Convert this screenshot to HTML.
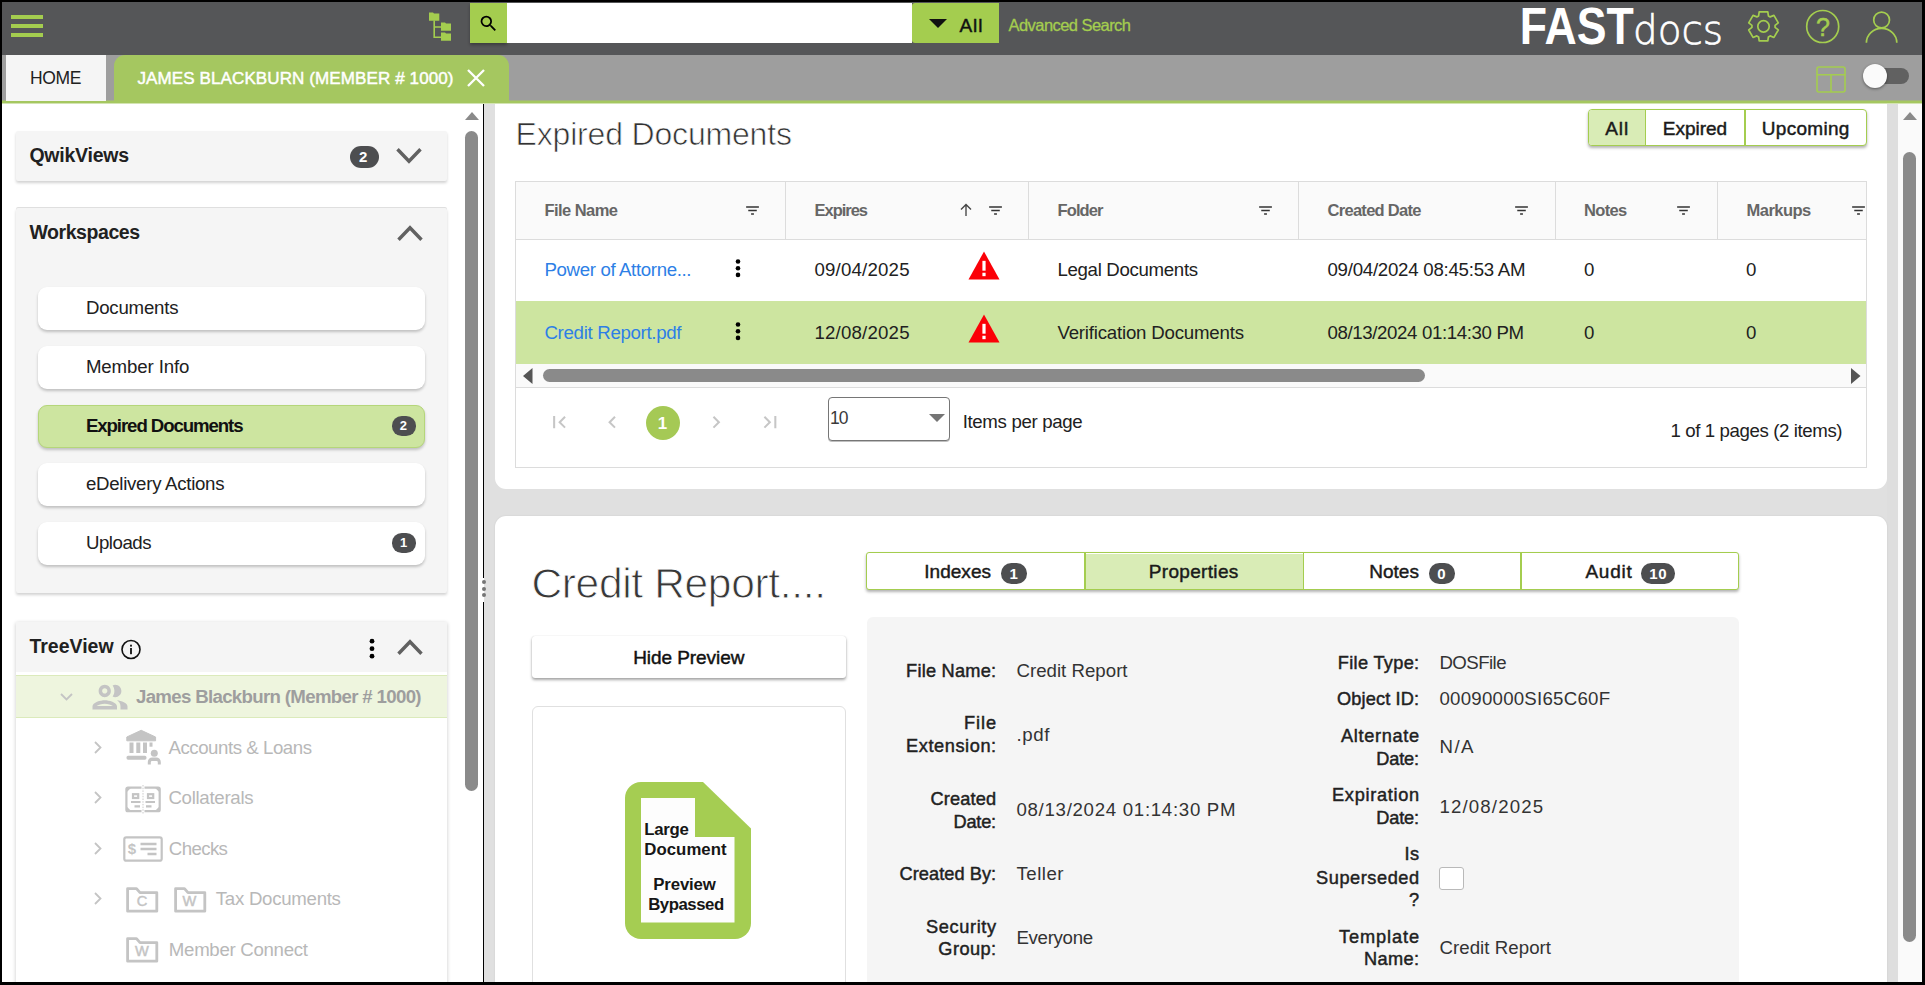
<!DOCTYPE html>
<html lang="en"><head><meta charset="utf-8"><title>FASTdocs</title><style>
*{box-sizing:border-box;margin:0;padding:0}
html,body{width:1925px;height:985px;overflow:hidden;background:#000}
body{font-family:'Liberation Sans',sans-serif;position:relative}
.t{position:absolute;white-space:pre;line-height:1;display:block}
.a{position:absolute}
svg{position:absolute;overflow:visible}
#app{position:absolute;left:2px;top:2px;width:1920px;height:980px;background:#fff;overflow:hidden}
.badge{position:absolute;background:#4d4e50;border-radius:12px}
.wsi{position:absolute;left:36px;width:387px;height:43px;background:#fff;border-radius:9px;box-shadow:0 2px 3px rgba(0,0,0,.22)}
</style></head><body>
<div id="app"><div class="a" id="o" style="left:-2px;top:-2px;width:1925px;height:985px">
<div class="a" style="left:2px;top:2px;width:1920px;height:53px;background:#555658"></div>
<div class="a" style="left:11px;top:15px;width:32px;height:4px;background:#a4cd4f"></div>
<div class="a" style="left:11px;top:24px;width:32px;height:4px;background:#a4cd4f"></div>
<div class="a" style="left:11px;top:33px;width:32px;height:4px;background:#a4cd4f"></div>
<svg style="left:428px;top:12px" width="24" height="30" viewBox="0 0 24 30" fill="#a4cd4f">
<path d="M1 0.400h4l1 1.200h5.300v7.200H1z"/><path d="M13 10.4h4l1 1.2h5v7.2H13z"/><path d="M13 20.4h4l1 1.2h5v7.2H13z"/>
<path d="M5.400 8.500v17.500h8v-1.600H7V15.800h6v-1.600h-6V8.500z"/></svg>
<div class="a" style="left:470px;top:3px;width:37px;height:40px;background:#a4cd4f;box-shadow:0 2px 3px rgba(0,0,0,.3)"></div>
<svg style="left:478px;top:13.2px" width="21" height="21" viewBox="0 0 24 24" fill="#000"><path d="M15.5 14h-.79l-.28-.27A6.471 6.471 0 0 0 16 9.5 6.5 6.5 0 1 0 9.5 16c1.61 0 3.09-.59 4.23-1.57l.27.28v.79l5 4.99L20.49 19l-4.99-5zm-6 0C7.01 14 5 11.99 5 9.5S7.01 5 9.5 5 14 7.01 14 9.5 11.99 14 9.5 14z"/></svg>
<div class="a" style="left:507px;top:3px;width:405px;height:40px;background:#fff"></div>
<div class="a" style="left:912px;top:3px;width:87px;height:40px;background:#a4cd4f;border-radius:3px 0 0 3px"></div>
<svg style="left:929px;top:19px" width="18" height="9" viewBox="0 0 18 9"><path d="M0 0h18l-9 9z" fill="#111"/></svg>
<span class="t" style="left:959.43px;top:15px;font-size:19.01px;line-height:21px;color:#111;-webkit-text-stroke:.45px #111;letter-spacing:1.008px;">All</span>
<span class="t" style="left:1008.50px;top:16px;font-size:16.5px;line-height:18px;color:#a4cd4f;letter-spacing:-0.555px;-webkit-text-stroke:.3px #a4cd4f;">Advanced Search</span>
<svg style="left:1515px;top:2px" width="215" height="53" viewBox="1515 2 215 53"><text x="1519.700" y="44.400" font-family="Liberation Sans,sans-serif" font-weight="700" font-size="51" fill="#fff" textLength="114" lengthAdjust="spacingAndGlyphs">FAST</text><text x="1633" y="44.400" font-family="DejaVu Sans Light,DejaVu Sans,sans-serif" font-weight="200" font-size="41" fill="#fff" stroke="#fff" stroke-width=".7" textLength="90" lengthAdjust="spacingAndGlyphs">docs</text></svg>
<svg style="left:0;top:0" width="1925" height="60"><path d="M1758.60 15.89 L1759.18 11.83 L1767.82 11.83 L1768.40 15.89 L1770.15 16.90 L1773.96 15.37 L1778.28 22.85 L1775.06 25.39 L1775.06 27.41 L1778.28 29.95 L1773.96 37.43 L1770.15 35.90 L1768.40 36.91 L1767.82 40.97 L1759.18 40.97 L1758.60 36.91 L1756.85 35.90 L1753.04 37.43 L1748.72 29.95 L1751.94 27.41 L1751.94 25.39 L1748.72 22.85 L1753.04 15.37 L1756.85 16.90Z" fill="none" stroke="#a4cd4f" stroke-width="1.7" stroke-linejoin="round"/><circle cx="1763.5" cy="26.4" r="5.7" fill="none" stroke="#a4cd4f" stroke-width="1.7"/><circle cx="1822.7" cy="26.5" r="16" fill="none" stroke="#a4cd4f" stroke-width="1.7"/><text x="1822.9" y="35.6" text-anchor="middle" font-family="Liberation Sans,sans-serif" font-size="25" fill="#a4cd4f" stroke="#a4cd4f" stroke-width=".5">?</text><circle cx="1881.6" cy="20" r="7.9" fill="none" stroke="#a4cd4f" stroke-width="1.7"/><path d="M1866.400 42.800a15.200 14.400 0 0 1 30.400 0" fill="none" stroke="#a4cd4f" stroke-width="1.7"/></svg>
<div class="a" style="left:2px;top:55px;width:1920px;height:46px;background:#9e9e9e"></div>
<div class="a" style="left:2px;top:100px;width:1920px;height:1px;background:#a2b37f"></div><div class="a" style="left:2px;top:101px;width:1920px;height:2px;background:#a5c760"></div><div class="a" style="left:2px;top:103px;width:1920px;height:1px;background:#d3e4b2;z-index:5"></div>
<div class="a" style="left:6px;top:55px;width:100px;height:46px;background:#f5f5f5"></div>
<span class="t" style="left:29.98px;top:68px;font-size:17.5px;line-height:20px;color:#212121;letter-spacing:-0.317px;">HOME</span>
<div class="a" style="left:114px;top:55px;width:395px;height:47px;background:#a5c760;border-radius:11px 11px 0 0"></div>
<span class="t" style="left:137.49px;top:69px;font-size:17.06px;line-height:19px;color:#fff;-webkit-text-stroke:.45px #fff;letter-spacing:0.082px;">JAMES BLACKBURN (MEMBER # 1000)</span>
<svg style="left:466px;top:68px" width="20" height="20" viewBox="0 0 20 20"><path d="M2 2L18 18M18 2L2 18" stroke="#fff" stroke-width="2.300" fill="none"/></svg>
<svg style="left:1816px;top:66px" width="30" height="27" viewBox="0 0 30 27" fill="none" stroke="#a4cd4f" stroke-width="1.6"><rect x="1" y="1" width="28" height="25" rx="2"/><path d="M1 8.800h28M15 8.800v17.200"/></svg>
<div class="a" style="left:1872px;top:68px;width:37px;height:16px;border-radius:8px;background:#616161"></div>
<div class="a" style="left:1863px;top:64px;width:24px;height:24px;border-radius:12px;background:#fafafa;box-shadow:0 1px 3px rgba(0,0,0,.45)"></div>
<svg style="left:465px;top:112px" width="14" height="8"><path d="M0 8L7 0L14 8z" fill="#8a8a8a"/></svg>
<div class="a" style="left:465px;top:131px;width:13px;height:660px;border-radius:6.5px;background:#8a8a8a"></div>
<div class="a" style="left:483px;top:103px;width:1px;height:475px;background:#000"></div>
<div class="a" style="left:483px;top:602px;width:1px;height:380px;background:#000"></div>
<div class="a" style="left:484px;top:103px;width:1413px;height:879px;background:#e0e0e0"></div>
<div class="a" style="left:481.8px;top:579.5px;width:4px;height:4px;border-radius:2px;background:#757575"></div>
<div class="a" style="left:481.8px;top:586.5px;width:4px;height:4px;border-radius:2px;background:#757575"></div>
<div class="a" style="left:481.8px;top:593.3px;width:4px;height:4px;border-radius:2px;background:#757575"></div>
<div class="a" style="left:16px;top:131px;width:431px;height:50px;background:#f5f5f5;border-radius:2px;box-shadow:0 2px 3px rgba(0,0,0,.18)"></div>
<span class="t" style="left:29.41px;top:144px;font-size:19.5px;line-height:22px;color:#212121;font-weight:700;letter-spacing:-0.233px;">QwikViews</span>
<div class="badge" style="left:350px;top:145.5px;width:29px;height:22px;border-radius:11.0px"></div>
<span class="t" style="left:359.05px;top:148px;font-size:15px;line-height:17px;color:#fff;font-weight:700;">2</span>
<svg style="left:396px;top:147.5px" width="26" height="15" viewBox="0 0 26 15"><path d="M1.5 1.2L13.0 13.2L24.5 1.2" fill="none" stroke="#616161" stroke-width="3.4"/></svg>
<div class="a" style="left:16px;top:208px;width:431px;height:385px;background:#f5f5f5;border-radius:2px;box-shadow:0 2px 3px rgba(0,0,0,.18), 0 -1px 0 rgba(0,0,0,.12)"></div>
<span class="t" style="left:29.41px;top:221px;font-size:19.5px;line-height:22px;color:#212121;font-weight:700;letter-spacing:-0.431px;">Workspaces</span>
<svg style="left:396.5px;top:225.5px" width="26" height="15" viewBox="0 0 26 15"><path d="M1.5 13.8L13.0 1.8L24.5 13.8" fill="none" stroke="#616161" stroke-width="3.4"/></svg>
<div class="wsi" style="left:38px;top:287px"></div>
<span class="t" style="left:85.94px;top:297px;font-size:18.67px;line-height:21px;color:#212121;letter-spacing:-0.217px;">Documents</span>
<div class="wsi" style="left:38px;top:346px"></div>
<span class="t" style="left:85.94px;top:356px;font-size:18.67px;line-height:21px;color:#212121;letter-spacing:-0.131px;">Member Info</span>
<div class="wsi" style="left:38px;top:405px;background:#cde5a0;border:1px solid #b5d67a"></div>
<span class="t" style="left:85.94px;top:415px;font-size:18.67px;line-height:21px;color:#111;font-weight:700;letter-spacing:-1.099px;">Expired Documents</span>
<div class="badge" style="left:392px;top:416px;width:24px;height:19.6px;border-radius:9.8px"></div>
<span class="t" style="left:399.81px;top:418px;font-size:13px;line-height:15px;color:#fff;font-weight:700;">2</span>
<div class="wsi" style="left:38px;top:463px"></div>
<span class="t" style="left:85.94px;top:473px;font-size:18.67px;line-height:21px;color:#212121;letter-spacing:-0.28px;">eDelivery Actions</span>
<div class="wsi" style="left:38px;top:522px"></div>
<span class="t" style="left:85.94px;top:532px;font-size:18.67px;line-height:21px;color:#212121;letter-spacing:-0.472px;">Uploads</span>
<div class="badge" style="left:392px;top:533px;width:24px;height:19.6px;border-radius:9.8px"></div>
<span class="t" style="left:400.11px;top:535px;font-size:13px;line-height:15px;color:#fff;font-weight:700;">1</span>
<div class="a" style="left:16px;top:622px;width:431px;height:365px;background:#fff;box-shadow:0 1px 4px rgba(0,0,0,.22)"></div>
<div class="a" style="left:16px;top:622px;width:431px;height:50px;background:#f5f5f5"></div>
<span class="t" style="left:29.41px;top:635px;font-size:19.5px;line-height:22px;color:#212121;font-weight:700;letter-spacing:-0.005px;">TreeView</span>
<svg style="left:120px;top:639px" width="22" height="22" viewBox="0 0 22 22"><circle cx="11" cy="10.5" r="9" fill="none" stroke="#111" stroke-width="1.6"/><rect x="10.1" y="9" width="1.8" height="6.2" fill="#111"/><rect x="10.1" y="5.7" width="1.8" height="1.9" fill="#111"/></svg>
<svg style="left:368px;top:638px" width="8" height="22" viewBox="0 0 8 22"><circle cx="4" cy="3.2" r="2.4"/><circle cx="4" cy="10.7" r="2.4"/><circle cx="4" cy="18.2" r="2.4"/></svg>
<svg style="left:396.5px;top:640px" width="26" height="15" viewBox="0 0 26 15"><path d="M1.5 13.8L13.0 1.8L24.5 13.8" fill="none" stroke="#616161" stroke-width="3.4"/></svg>
<div class="a" style="left:16px;top:675px;width:431px;height:43px;background:#eef5de;border:1px solid #dbeabb;border-left:0;border-right:0"></div>
<svg style="left:60px;top:693px" width="13" height="8" viewBox="0 0 13 8"><path d="M1 1L6.5 6.5L12 1" fill="none" stroke="#c4c4c4" stroke-width="1.8"/></svg>
<svg style="left:89px;top:676.3px" width="42" height="42.3" viewBox="0 0 24 24" fill="#c4c4c4" preserveAspectRatio="none"><path d="M9 13.75c-2.34 0-7 1.17-7 3.5V19h14v-1.75c0-2.33-4.66-3.5-7-3.5zM4.34 17c.84-.58 2.87-1.25 4.66-1.25s3.82.67 4.66 1.25H4.34zM9 12c1.93 0 3.5-1.57 3.5-3.5S10.930 5 9 5 5.500 6.570 5.500 8.500 7.070 12 9 12zm0-5c.83 0 1.500.67 1.500 1.500S9.830 10 9 10s-1.500-.67-1.500-1.500S8.170 7 9 7zm7.040 6.810c1.160.84 1.960 1.960 1.960 3.440V19h4v-1.750c0-2.020-3.500-3.170-5.960-3.440zM15 12c1.930 0 3.500-1.570 3.500-3.500S16.930 5 15 5c-.54 0-1.040.13-1.500.35.630.89 1 1.980 1 3.150s-.37 2.260-1 3.150c.46.22.96.35 1.500.35z"/></svg>
<span class="t" style="left:135.94px;top:686px;font-size:18.67px;line-height:21px;color:#9e9e9e;font-weight:700;letter-spacing:-0.676px;">James Blackburn (Member # 1000)</span>
<span class="t" style="left:168.44px;top:737px;font-size:18.67px;line-height:21px;color:#b8b8b8;letter-spacing:-0.451px;">Accounts &amp; Loans</span>
<svg style="left:93.8px;top:741.3px" width="8" height="13" viewBox="0 0 8 13"><path d="M1 1L6.5 6.5L1 12" fill="none" stroke="#c4c4c4" stroke-width="1.8"/></svg>
<span class="t" style="left:168.44px;top:787px;font-size:18.67px;line-height:21px;color:#b8b8b8;letter-spacing:-0.302px;">Collaterals</span>
<svg style="left:93.8px;top:791.3px" width="8" height="13" viewBox="0 0 8 13"><path d="M1 1L6.5 6.5L1 12" fill="none" stroke="#c4c4c4" stroke-width="1.8"/></svg>
<span class="t" style="left:168.84px;top:838px;font-size:18.67px;line-height:21px;color:#b8b8b8;letter-spacing:-0.62px;">Checks</span>
<svg style="left:93.8px;top:842px" width="8" height="13" viewBox="0 0 8 13"><path d="M1 1L6.5 6.5L1 12" fill="none" stroke="#c4c4c4" stroke-width="1.8"/></svg>
<span class="t" style="left:215.84px;top:888px;font-size:18.67px;line-height:21px;color:#b8b8b8;letter-spacing:-0.288px;">Tax Documents</span>
<svg style="left:93.8px;top:892.3px" width="8" height="13" viewBox="0 0 8 13"><path d="M1 1L6.5 6.5L1 12" fill="none" stroke="#c4c4c4" stroke-width="1.8"/></svg>
<span class="t" style="left:168.84px;top:939px;font-size:18.67px;line-height:21px;color:#b8b8b8;letter-spacing:-0.306px;">Member Connect</span>
<svg style="left:125.500px;top:730px" width="36" height="36" viewBox="0 0 36 36" fill="#c4c4c4">
<path d="M0.800 7L15.200 0.300L29.600 7V10.800H0.800z" stroke="#c4c4c4" stroke-width="1" stroke-linejoin="round"/><rect x="3.500" y="12.500" width="4" height="10.500"/><rect x="10.300" y="12.500" width="4" height="10.500"/><rect x="17" y="12.500" width="4" height="10.500"/><rect x="23.500" y="12.500" width="3" height="4.200"/>
<rect x="0.500" y="25.800" width="20" height="3.900" rx="1.600"/>
<circle cx="28.300" cy="23.200" r="3.500"/><path d="M21.800 34.600v-2.700a4.400 4.400 0 0 1 4.400-4.400h4.200a4.400 4.400 0 0 1 4.400 4.400v2.700h-3v-2.400a1.300 1.300 0 0 0-1.300-1.300h-4.400a1.300 1.300 0 0 0-1.300 1.300v2.400z"/></svg>
<svg style="left:124px;top:784.500px" width="38" height="29" viewBox="0 0 38 29" fill="none" stroke="#c4c4c4" stroke-width="2.200">
<rect x="2.400" y="2.600" width="33.300" height="23.600" rx="1.500"/><path d="M19 0v29" stroke="#fff" stroke-width="3"/><path d="M19 0v29" stroke-width="0.900" stroke-dasharray="1.500 1.200"/>
<rect x="9" y="9.200" width="5.200" height="3.800"/><rect x="24" y="9.200" width="5.200" height="3.800"/><path d="M7 17h9.500M21.500 17h9.500M10.500 21.300h5.500M22 21.300h5.500"/>
<path d="M2.400 7.600V2.600H7.400zM35.700 7.600V2.600H30.700zM2.400 21.200V26.200H7.400zM35.700 21.200V26.200H30.700z" fill="#c4c4c4" stroke="none"/></svg>
<svg style="left:123px;top:836px" width="41" height="26" viewBox="0 0 41 26" fill="none" stroke="#c4c4c4" stroke-width="2.200">
<rect x="1.300" y="1.300" width="37.400" height="23.400" rx="2"/><path d="M17.500 8h16M17.500 13h16M24.500 18h9" stroke-width="2.400"/></svg>
<span class="t" style="left:127.85px;top:840px;font-size:15px;line-height:17px;color:#c4c4c4;font-weight:700;">$</span>
<svg style="left:126.2px;top:886.5px" width="33" height="26" viewBox="0 0 33 26" fill="none" stroke="#c4c4c4" stroke-width="2.800" stroke-linejoin="round"><path d="M1.600 24.200V1.600H10.500l3.500 4H30.800V24.200z"/></svg>
<span class="t" style="left:136.86px;top:893px;font-size:14.62px;line-height:16px;color:#c4c4c4;-webkit-text-stroke:.45px #c4c4c4;">C</span>
<svg style="left:173.7px;top:886.5px" width="33" height="26" viewBox="0 0 33 26" fill="none" stroke="#c4c4c4" stroke-width="2.800" stroke-linejoin="round"><path d="M1.600 24.200V1.600H10.500l3.500 4H30.800V24.200z"/></svg>
<span class="t" style="left:182.56px;top:893px;font-size:14.62px;line-height:16px;color:#c4c4c4;-webkit-text-stroke:.45px #c4c4c4;">W</span>
<svg style="left:126.2px;top:937px" width="33" height="26" viewBox="0 0 33 26" fill="none" stroke="#c4c4c4" stroke-width="2.800" stroke-linejoin="round"><path d="M1.600 24.200V1.600H10.500l3.500 4H30.800V24.200z"/></svg>
<span class="t" style="left:135.06px;top:943px;font-size:14.62px;line-height:16px;color:#c4c4c4;-webkit-text-stroke:.45px #c4c4c4;">W</span>
<div class="a" style="left:1887px;top:103px;width:11px;height:879px;background:#dedede"></div>
<div class="a" style="left:1898px;top:103px;width:24px;height:879px;background:#fafafa"></div>
<svg style="left:1903px;top:112px" width="14" height="8"><path d="M0 8L7 0L14 8z" fill="#8a8a8a"/></svg>
<div class="a" style="left:1903px;top:152px;width:13px;height:790px;border-radius:6.5px;background:#8a8a8a"></div>
<div class="a" style="left:495px;top:103px;width:1392px;height:386px;background:#fff;border-radius:0 0 11px 11px"></div>
<span class="t" style="left:515.54px;top:116px;font-size:32px;line-height:36px;color:#333;letter-spacing:-0.176px;-webkit-text-stroke:.7px #fff;">Expired Documents</span>
<div class="a" style="left:1588px;top:109px;width:279px;height:36.500px;background:#fff;border:1px solid #a4cd4f;border-radius:4px;box-shadow:0 2px 3px rgba(0,0,0,.3)"></div>
<div class="a" style="left:1589px;top:110px;width:56px;height:34.500px;background:#d9ecb6;border-radius:3px 0 0 3px"></div>
<div class="a" style="left:1644.500px;top:110px;width:1.500px;height:34.500px;background:#a4cd4f"></div>
<div class="a" style="left:1744px;top:110px;width:1.500px;height:34.500px;background:#a4cd4f"></div>
<span class="t" style="left:1605.13px;top:118px;font-size:19.01px;line-height:21px;color:#1a1a1a;-webkit-text-stroke:.45px #1a1a1a;letter-spacing:1.008px;">All</span>
<span class="t" style="left:1662.83px;top:118px;font-size:19.01px;line-height:21px;color:#1a1a1a;-webkit-text-stroke:.45px #1a1a1a;letter-spacing:-0.014px;">Expired</span>
<span class="t" style="left:1761.83px;top:118px;font-size:19.01px;line-height:21px;color:#1a1a1a;-webkit-text-stroke:.45px #1a1a1a;letter-spacing:0.285px;">Upcoming</span>
<div class="a" style="left:515px;top:181px;width:1352px;height:287px;background:#fff;border:1px solid #dcdcdc"></div>
<div class="a" style="left:516px;top:182px;width:1350px;height:58px;background:#fafafa;border-bottom:1px solid #dcdcdc"></div>
<div class="a" style="left:785px;top:182px;width:1px;height:58px;background:#dcdcdc"></div>
<div class="a" style="left:1028px;top:182px;width:1px;height:58px;background:#dcdcdc"></div>
<div class="a" style="left:1298px;top:182px;width:1px;height:58px;background:#dcdcdc"></div>
<div class="a" style="left:1555px;top:182px;width:1px;height:58px;background:#dcdcdc"></div>
<div class="a" style="left:1717px;top:182px;width:1px;height:58px;background:#dcdcdc"></div>
<div class="a" style="left:516px;top:301px;width:1350px;height:63px;background:#cde5a0"></div>
<div class="a" style="left:516px;top:364px;width:1350px;height:24px;background:#fafafa;border-bottom:1px solid #dcdcdc"></div>
<span class="t" style="left:544.50px;top:201px;font-size:16.5px;line-height:18px;color:#666;font-weight:700;letter-spacing:-0.558px;">File Name</span>
<svg style="left:743.9px;top:202.0px" width="17.04" height="17.04" viewBox="0 0 24 24" fill="#333"><path d="M10 18h4v-2h-4v2zM3 6v2h18V6H3zm3 7h12v-2H6v2z"/></svg>
<span class="t" style="left:814.50px;top:201px;font-size:16.5px;line-height:18px;color:#666;font-weight:700;letter-spacing:-1.022px;">Expires</span>
<svg style="left:986.6px;top:202.0px" width="17.04" height="17.04" viewBox="0 0 24 24" fill="#333"><path d="M10 18h4v-2h-4v2zM3 6v2h18V6H3zm3 7h12v-2H6v2z"/></svg>
<span class="t" style="left:1057.51px;top:201px;font-size:16.5px;line-height:18px;color:#666;font-weight:700;letter-spacing:-0.886px;">Folder</span>
<svg style="left:1256.6px;top:202.0px" width="17.04" height="17.04" viewBox="0 0 24 24" fill="#333"><path d="M10 18h4v-2h-4v2zM3 6v2h18V6H3zm3 7h12v-2H6v2z"/></svg>
<span class="t" style="left:1327.51px;top:201px;font-size:16.5px;line-height:18px;color:#666;font-weight:700;letter-spacing:-0.71px;">Created Date</span>
<svg style="left:1512.9px;top:202.0px" width="17.04" height="17.04" viewBox="0 0 24 24" fill="#333"><path d="M10 18h4v-2h-4v2zM3 6v2h18V6H3zm3 7h12v-2H6v2z"/></svg>
<span class="t" style="left:1584.11px;top:201px;font-size:16.5px;line-height:18px;color:#666;font-weight:700;letter-spacing:-0.713px;">Notes</span>
<svg style="left:1675.2px;top:202.0px" width="17.04" height="17.04" viewBox="0 0 24 24" fill="#333"><path d="M10 18h4v-2h-4v2zM3 6v2h18V6H3zm3 7h12v-2H6v2z"/></svg>
<span class="t" style="left:1746.51px;top:201px;font-size:16.5px;line-height:18px;color:#666;font-weight:700;letter-spacing:-0.512px;">Markups</span>
<svg style="left:1850.4px;top:202.0px" width="17.04" height="17.04" viewBox="0 0 24 24" fill="#333"><path d="M10 18h4v-2h-4v2zM3 6v2h18V6H3zm3 7h12v-2H6v2z"/></svg>
<svg style="left:959px;top:203px" width="14" height="14" viewBox="0 0 14 14"><path d="M7 13V1.500M2 6.500L7 1.500L12 6.500" fill="none" stroke="#444" stroke-width="1.350"/></svg>
<span class="t" style="left:544.44px;top:259px;font-size:18.67px;line-height:21px;color:#2d7fe6;letter-spacing:-0.354px;">Power of Attorne...</span>
<svg style="left:735px;top:259px" width="6" height="19" viewBox="0 0 6 19"><circle cx="3" cy="2.500" r="2.300"/><circle cx="3" cy="9.200" r="2.300"/><circle cx="3" cy="15.900" r="2.300"/></svg>
<span class="t" style="left:814.44px;top:259px;font-size:18.67px;line-height:21px;color:#212121;letter-spacing:0.194px;">09/04/2025</span>
<svg style="left:968.2px;top:251.3px" width="32" height="29" viewBox="0 0 32 28" preserveAspectRatio="none"><path d="M16 0.500L31.500 27.500H0.500z" fill="#fb0007"/><rect x="14.400" y="9.500" width="3.200" height="9.500" fill="#fff"/><rect x="14.400" y="21" width="3.200" height="3.300" fill="#fff"/></svg>
<span class="t" style="left:1057.44px;top:259px;font-size:18.67px;line-height:21px;color:#212121;letter-spacing:-0.326px;">Legal Documents</span>
<span class="t" style="left:1327.44px;top:259px;font-size:18.67px;line-height:21px;color:#212121;letter-spacing:-0.248px;">09/04/2024 08:45:53 AM</span>
<span class="t" style="left:1584.04px;top:259px;font-size:18.67px;line-height:21px;color:#212121;">0</span>
<span class="t" style="left:1745.94px;top:259px;font-size:18.67px;line-height:21px;color:#212121;">0</span>
<span class="t" style="left:544.44px;top:322px;font-size:18.67px;line-height:21px;color:#2d7fe6;letter-spacing:-0.31px;">Credit Report.pdf</span>
<svg style="left:735px;top:322px" width="6" height="19" viewBox="0 0 6 19"><circle cx="3" cy="2.500" r="2.300"/><circle cx="3" cy="9.200" r="2.300"/><circle cx="3" cy="15.900" r="2.300"/></svg>
<span class="t" style="left:814.44px;top:322px;font-size:18.67px;line-height:21px;color:#212121;letter-spacing:0.194px;">12/08/2025</span>
<svg style="left:968.2px;top:314.3px" width="32" height="29" viewBox="0 0 32 28" preserveAspectRatio="none"><path d="M16 0.500L31.500 27.500H0.500z" fill="#fb0007"/><rect x="14.400" y="9.500" width="3.200" height="9.500" fill="#fff"/><rect x="14.400" y="21" width="3.200" height="3.300" fill="#fff"/></svg>
<span class="t" style="left:1057.44px;top:322px;font-size:18.67px;line-height:21px;color:#212121;letter-spacing:-0.2px;">Verification Documents</span>
<span class="t" style="left:1327.44px;top:322px;font-size:18.67px;line-height:21px;color:#212121;letter-spacing:-0.369px;">08/13/2024 01:14:30 PM</span>
<span class="t" style="left:1584.04px;top:322px;font-size:18.67px;line-height:21px;color:#212121;">0</span>
<span class="t" style="left:1745.94px;top:322px;font-size:18.67px;line-height:21px;color:#212121;">0</span>
<svg style="left:522.500px;top:368px" width="10" height="16"><path d="M9.500 0L0 8L9.500 16z" fill="#555"/></svg>
<svg style="left:1850.500px;top:368px" width="10" height="16"><path d="M0 0L9.500 8L0 16z" fill="#555"/></svg>
<div class="a" style="left:543px;top:369px;width:882px;height:13px;border-radius:6.500px;background:#8a8a8a"></div>
<svg style="left:546.6981999999999px;top:409.56px" width="24.48" height="24.48" viewBox="0 0 24 24" fill="#c6c6c6"><path d="M18.410 16.590L13.820 12l4.590-4.590L17 6l-6 6 6 6zM6 6h2v12H6z"/></svg>
<svg style="left:599.74px;top:409.56px" width="24.48" height="24.48" viewBox="0 0 24 24" fill="#c6c6c6"><path d="M15.410 7.410L14 6l-6 6 6 6 1.410-1.410L10.830 12z"/></svg>
<div class="a" style="left:646px;top:406px;width:34px;height:34px;border-radius:17px;background:#a5c955"></div>
<span class="t" style="left:657.69px;top:414px;font-size:17px;line-height:19px;color:#fff;font-weight:700;">1</span>
<svg style="left:704.2382px;top:409.56px" width="24.48" height="24.48" viewBox="0 0 24 24" fill="#c6c6c6"><path d="M10 6L8.590 7.410 13.170 12l-4.580 4.590L10 18l6-6z"/></svg>
<svg style="left:757.8982px;top:409.56px" width="24.48" height="24.48" viewBox="0 0 24 24" fill="#c6c6c6"><path d="M5.590 7.410L10.180 12l-4.590 4.590L7 18l6-6-6-6zM16 6h2v12h-2z"/></svg>
<div class="a" style="left:828px;top:397px;width:122px;height:43.500px;border:1px solid #767676;border-radius:4px;background:#fff;box-shadow:0 1px 0 rgba(0,0,0,.25)"></div>
<span class="t" style="left:829.98px;top:408px;font-size:17.5px;line-height:20px;color:#3a3a3a;letter-spacing:-0.919px;">10</span>
<svg style="left:928.500px;top:414px" width="16" height="8"><path d="M0 0H16L8 8z" fill="#757575"/></svg>
<span class="t" style="left:962.64px;top:411px;font-size:18.67px;line-height:21px;color:#212121;letter-spacing:-0.333px;">Items per page</span>
<span class="t" style="left:1670.44px;top:420px;font-size:18.67px;line-height:21px;color:#212121;letter-spacing:-0.396px;">1 of 1 pages (2 items)</span>
<div class="a" style="left:495px;top:515.500px;width:1392px;height:480px;background:#fff;border-radius:11px 11px 0 0;box-shadow:0 0 2px rgba(0,0,0,.1)"></div>
<span class="t" style="left:531.43px;top:560px;font-size:42.5px;line-height:47px;color:#383838;letter-spacing:-0.34px;-webkit-text-stroke:.9px #fff;">Credit Report....</span>
<div class="a" style="left:532px;top:635.500px;width:314px;height:42px;background:#fff;border-radius:3px;box-shadow:0 2px 3px rgba(0,0,0,.35),0 0 1px rgba(0,0,0,.2)"></div>
<span class="t" style="left:633.23px;top:647px;font-size:19.01px;line-height:21px;color:#111;-webkit-text-stroke:.45px #111;letter-spacing:-0.072px;">Hide Preview</span>
<div class="a" style="left:532px;top:705.500px;width:314px;height:300px;background:#fff;border:1px solid #e0e0e0;border-radius:6px"></div>
<svg style="left:625px;top:782px" width="126" height="157" viewBox="0 0 126 157"><path d="M16 0H78L126 46.500V141a16 16 0 0 1-16 16H16a16 16 0 0 1-16-16V16A16 16 0 0 1 16 0z" fill="#a5cd52"/><path d="M16 16H70V55H109.500V140.500H16z" fill="#fdfdfd"/></svg>
<span class="t" style="left:644.30px;top:820px;font-size:16.8px;line-height:19px;color:#161616;font-weight:700;letter-spacing:-0.299px;">Large</span>
<span class="t" style="left:644.30px;top:840px;font-size:16.8px;line-height:19px;color:#161616;font-weight:700;letter-spacing:0.037px;">Document</span>
<span class="t" style="left:653.30px;top:875px;font-size:16.8px;line-height:19px;color:#161616;font-weight:700;letter-spacing:-0.158px;">Preview</span>
<span class="t" style="left:648.20px;top:895px;font-size:16.8px;line-height:19px;color:#161616;font-weight:700;letter-spacing:-0.47px;">Bypassed</span>
<div class="a" style="left:866px;top:552px;width:873px;height:38px;background:#fff;border:1px solid #a4cd4f;border-radius:3px;box-shadow:0 2px 3px rgba(0,0,0,.3)"></div>
<div class="a" style="left:1085px;top:553.500px;width:218px;height:35px;background:#d9ecb6"></div>
<div class="a" style="left:1084.3px;top:553px;width:1.500px;height:36px;background:#a4cd4f"></div>
<div class="a" style="left:1302.6px;top:553px;width:1.500px;height:36px;background:#a4cd4f"></div>
<div class="a" style="left:1520px;top:553px;width:1.500px;height:36px;background:#a4cd4f"></div>
<span class="t" style="left:924.33px;top:561px;font-size:19.01px;line-height:21px;color:#1a1a1a;-webkit-text-stroke:.45px #1a1a1a;letter-spacing:0.016px;">Indexes</span>
<div class="badge" style="left:1001px;top:563.3px;width:26px;height:20.7px;border-radius:10.35px"></div>
<span class="t" style="left:1009.55px;top:565px;font-size:15px;line-height:17px;color:#fff;font-weight:700;">1</span>
<span class="t" style="left:1148.83px;top:561px;font-size:19.01px;line-height:21px;color:#1a1a1a;-webkit-text-stroke:.45px #1a1a1a;letter-spacing:0.315px;">Properties</span>
<span class="t" style="left:1369.23px;top:561px;font-size:19.01px;line-height:21px;color:#1a1a1a;-webkit-text-stroke:.45px #1a1a1a;letter-spacing:0.025px;">Notes</span>
<div class="badge" style="left:1429px;top:563.3px;width:26px;height:20.7px;border-radius:10.35px"></div>
<span class="t" style="left:1437.35px;top:565px;font-size:15px;line-height:17px;color:#fff;font-weight:700;">0</span>
<span class="t" style="left:1585.43px;top:561px;font-size:19.01px;line-height:21px;color:#1a1a1a;-webkit-text-stroke:.45px #1a1a1a;letter-spacing:0.757px;">Audit</span>
<div class="badge" style="left:1641px;top:563.3px;width:34px;height:20.7px;border-radius:10.35px"></div>
<span class="t" style="left:1649.35px;top:565px;font-size:15px;line-height:17px;color:#fff;font-weight:700;letter-spacing:0.512px;">10</span>
<div class="a" style="left:866.500px;top:617px;width:872px;height:380px;background:#f5f5f5;border-radius:6px"></div>
<span class="t" style="left:906.06px;top:661px;font-size:18.2px;line-height:20px;color:#212121;-webkit-text-stroke:.45px #212121;letter-spacing:0.239px;">File Name:</span>
<span class="t" style="left:1016.44px;top:660px;font-size:18.67px;line-height:21px;color:#333;letter-spacing:0.014px;">Credit Report</span>
<span class="t" style="left:964.06px;top:713px;font-size:18.2px;line-height:20px;color:#212121;-webkit-text-stroke:.45px #212121;letter-spacing:0.926px;">File</span>
<span class="t" style="left:906.05px;top:736px;font-size:18.2px;line-height:20px;color:#212121;-webkit-text-stroke:.45px #212121;letter-spacing:0.573px;">Extension:</span>
<span class="t" style="left:1016.44px;top:724px;font-size:18.67px;line-height:21px;color:#333;letter-spacing:0.665px;">.pdf</span>
<span class="t" style="left:930.55px;top:789px;font-size:18.2px;line-height:20px;color:#212121;-webkit-text-stroke:.45px #212121;letter-spacing:0.146px;">Created</span>
<span class="t" style="left:953.55px;top:812px;font-size:18.2px;line-height:20px;color:#212121;-webkit-text-stroke:.45px #212121;letter-spacing:-0.223px;">Date:</span>
<span class="t" style="left:1016.44px;top:799px;font-size:18.67px;line-height:21px;color:#333;letter-spacing:0.703px;">08/13/2024 01:14:30 PM</span>
<span class="t" style="left:899.55px;top:864px;font-size:18.2px;line-height:20px;color:#212121;-webkit-text-stroke:.45px #212121;letter-spacing:0.055px;">Created By:</span>
<span class="t" style="left:1016.44px;top:863px;font-size:18.67px;line-height:21px;color:#333;letter-spacing:0.505px;">Teller</span>
<span class="t" style="left:926.05px;top:917px;font-size:18.2px;line-height:20px;color:#212121;-webkit-text-stroke:.45px #212121;letter-spacing:0.627px;">Security</span>
<span class="t" style="left:938.35px;top:939px;font-size:18.2px;line-height:20px;color:#212121;-webkit-text-stroke:.45px #212121;letter-spacing:0.437px;">Group:</span>
<span class="t" style="left:1016.44px;top:927px;font-size:18.67px;line-height:21px;color:#333;letter-spacing:-0.301px;">Everyone</span>
<span class="t" style="left:1337.75px;top:653px;font-size:18.2px;line-height:20px;color:#212121;-webkit-text-stroke:.45px #212121;letter-spacing:0.32px;">File Type:</span>
<span class="t" style="left:1439.44px;top:652px;font-size:18.67px;line-height:21px;color:#333;letter-spacing:-0.563px;">DOSFile</span>
<span class="t" style="left:1337.05px;top:689px;font-size:18.2px;line-height:20px;color:#212121;-webkit-text-stroke:.45px #212121;letter-spacing:0.137px;">Object ID:</span>
<span class="t" style="left:1439.44px;top:688px;font-size:18.67px;line-height:21px;color:#333;letter-spacing:0.24px;">00090000SI65C60F</span>
<span class="t" style="left:1341.05px;top:726px;font-size:18.2px;line-height:20px;color:#212121;-webkit-text-stroke:.45px #212121;letter-spacing:0.662px;">Alternate</span>
<span class="t" style="left:1376.25px;top:749px;font-size:18.2px;line-height:20px;color:#212121;-webkit-text-stroke:.45px #212121;letter-spacing:-0.148px;">Date:</span>
<span class="t" style="left:1439.44px;top:736px;font-size:18.67px;line-height:21px;color:#333;letter-spacing:1.505px;">N/A</span>
<span class="t" style="left:1332.05px;top:785px;font-size:18.2px;line-height:20px;color:#212121;-webkit-text-stroke:.45px #212121;letter-spacing:0.689px;">Expiration</span>
<span class="t" style="left:1376.25px;top:808px;font-size:18.2px;line-height:20px;color:#212121;-webkit-text-stroke:.45px #212121;letter-spacing:-0.148px;">Date:</span>
<span class="t" style="left:1439.44px;top:796px;font-size:18.67px;line-height:21px;color:#333;letter-spacing:1.138px;">12/08/2025</span>
<span class="t" style="left:1404.55px;top:844px;font-size:18.2px;line-height:20px;color:#212121;-webkit-text-stroke:.45px #212121;letter-spacing:0.436px;">Is</span>
<span class="t" style="left:1316.06px;top:868px;font-size:18.2px;line-height:20px;color:#212121;-webkit-text-stroke:.45px #212121;letter-spacing:0.555px;">Superseded</span>
<span class="t" style="left:1409.02px;top:890px;font-size:18.2px;line-height:20px;color:#212121;-webkit-text-stroke:.45px #212121;">?</span>
<div class="a" style="left:1439px;top:866.5px;width:25px;height:23.5px;background:#fff;border:1.5px solid #b9b9b9;border-radius:3px"></div>
<span class="t" style="left:1339.06px;top:927px;font-size:18.2px;line-height:20px;color:#212121;-webkit-text-stroke:.45px #212121;letter-spacing:0.899px;">Template</span>
<span class="t" style="left:1364.06px;top:949px;font-size:18.2px;line-height:20px;color:#212121;-webkit-text-stroke:.45px #212121;letter-spacing:0.378px;">Name:</span>
<span class="t" style="left:1439.44px;top:937px;font-size:18.67px;line-height:21px;color:#333;letter-spacing:0.056px;">Credit Report</span>
</div></div>
</body></html>
